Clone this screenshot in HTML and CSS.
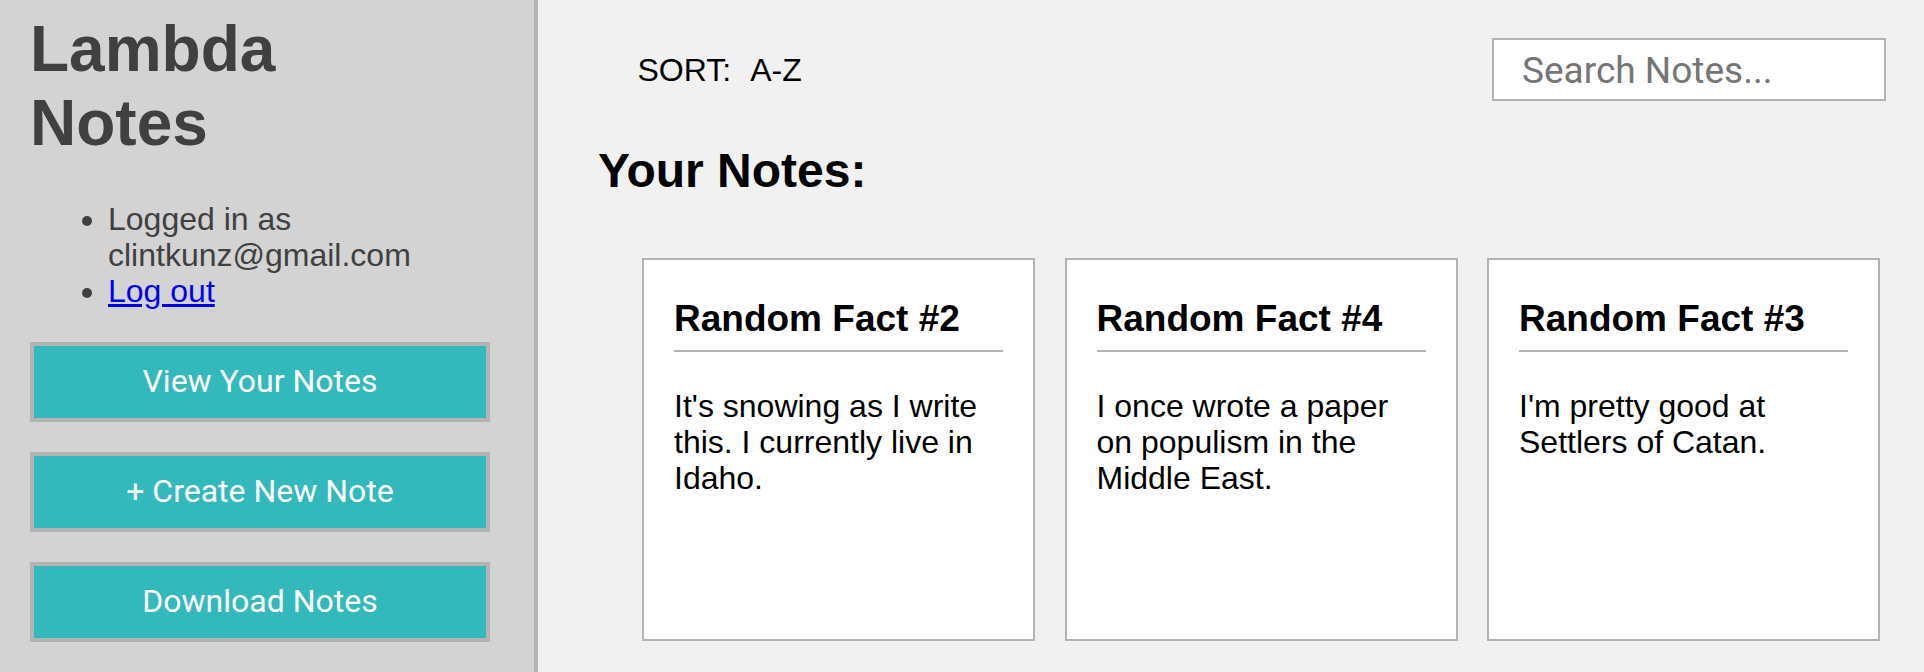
FILE: index.html
```html
<!DOCTYPE html>
<html lang="en">
<head>
<meta charset="utf-8">
<title>Lambda Notes</title>
<link rel="stylesheet" href="styles.css">
</head>
<body>
<div class="app">
  <aside class="sidebar">
    <h1 class="brand">Lambda<br>Notes</h1>
    <ul class="account">
      <li>Logged in as clintkunz@gmail.com</li>
      <li><a href="#" class="logout">Log out</a></li>
    </ul>
    <div class="actions">
      <button class="action-btn">View Your Notes</button>
      <button class="action-btn">+ Create New Note</button>
      <button class="action-btn">Download Notes</button>
    </div>
  </aside>
  <main class="main">
    <div class="toolbar">
      <div class="sort">SORT:<span class="sort-option">A-Z</span></div>
      <input class="search" type="text" placeholder="Search Notes...">
    </div>
    <h2 class="section-title">Your Notes:</h2>
    <div class="cards">
      <div class="card">
        <h3 class="card-title">Random Fact #2</h3>
        <p class="card-body">It's snowing as I write this. I currently live in Idaho.</p>
      </div>
      <div class="card">
        <h3 class="card-title">Random Fact #4</h3>
        <p class="card-body">I once wrote a paper on populism in the Middle East.</p>
      </div>
      <div class="card">
        <h3 class="card-title">Random Fact #3</h3>
        <p class="card-body">I'm pretty good at Settlers of Catan.</p>
      </div>
    </div>
  </main>
</div>
</body>
</html>
```

FILE: styles.css
```css
* {
  box-sizing: border-box;
}

html, body {
  margin: 0;
  padding: 0;
  height: 100%;
}

body {
  font-family: "Liberation Sans", Arial, Helvetica, sans-serif;
  font-size: 32px;
  line-height: 36px;
  color: #000;
  overflow: hidden;
}

.app {
  display: flex;
  height: 672px;
}

.sidebar {
  width: 538px;
  flex: 0 0 538px;
  background: #d3d3d3;
  border-right: 4px solid #b3b3b3;
  padding: 0 0 0 28px;
  color: #404040;
}

.brand {
  margin: 11.5px 0 0 2px;
  font-size: 64px;
  line-height: 74px;
  font-weight: bold;
  color: #404040;
}

.account {
  margin: 41.4px 0 0;
  padding-left: 80px;
  font-size: 32px;
  line-height: 36px;
}

.logout {
  color: #0000ee;
  text-decoration: underline;
}

.actions {
  display: flex;
  flex-direction: column;
  gap: 30px;
  margin-top: 33.4px;
  padding-left: 2px;
}

.action-btn {
  width: 460px;
  height: 80px;
  margin: 0;
  padding: 0 0 2px;
  background: #33b8bc;
  border: 4px solid #b3b3b3;
  border-radius: 0;
  color: #fff;
  font-family: Roboto, "Liberation Sans", Arial, sans-serif;
  font-size: 32px;
  line-height: 36px;
  text-align: center;
  cursor: pointer;
}

.main {
  flex: 1;
  background: #f1f1f1;
  padding: 0 38px 0 60px;
}

.toolbar {
  display: flex;
  justify-content: space-between;
  align-items: center;
  padding-top: 38px;
}

.sort {
  margin-left: 39.5px;
  font-size: 32px;
  line-height: 36px;
}

.sort-option {
  margin-left: 19px;
}

.search {
  width: 394px;
  height: 63px;
  margin: 0;
  padding: 2px 0 0 28px;
  border: 2px solid #b3b3b3;
  border-radius: 0;
  background: #fff;
  font-family: Roboto, "Liberation Sans", Arial, sans-serif;
  font-size: 37px;
  color: #000;
  outline: none;
}

.search::placeholder {
  color: #757575;
}

.section-title {
  margin: 41.5px 0 0;
  font-size: 48px;
  line-height: 55px;
  font-weight: bold;
}

.cards {
  display: flex;
  gap: 29.5px;
  margin: 60.8px 0 0 44px;
}

.card {
  width: 393px;
  height: 383px;
  flex: 0 0 393px;
  background: #fff;
  border: 2px solid #b3b3b3;
  padding: 37.8px 30px 0;
}

.card-title {
  margin: 0;
  padding-bottom: 10px;
  border-bottom: 2px solid #b3b3b3;
  font-size: 37px;
  line-height: 42px;
  font-weight: bold;
}

.card-body {
  margin: 35.6px 0 0;
  font-size: 32px;
  line-height: 36px;
}
```
